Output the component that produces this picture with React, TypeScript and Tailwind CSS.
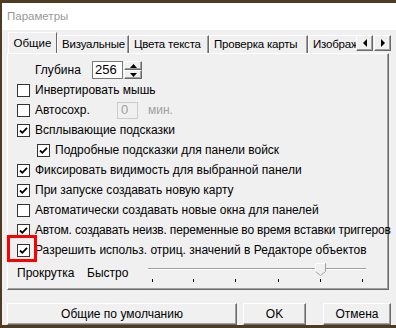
import React from "react";

const font = "font-['Liberation_Sans','Arial',sans-serif]";

function Check({ checked }: { checked: boolean }) {
  return (
    <div className="w-[13px] h-[13px] border border-[#333333] bg-white flex items-center justify-center shrink-0">
      {checked && (
        <svg width="11" height="11" viewBox="0 0 11 11">
          <path d="M2 5.5 L4.3 7.8 L9 2.8" fill="none" stroke="#000" strokeWidth="1.8" />
        </svg>
      )}
    </div>
  );
}

function Row({ label, checked, indent, tight }: { label: string; checked: boolean; indent?: boolean; tight?: boolean }) {
  return (
    <div className={`h-[20px] flex items-center ${indent ? "pl-[20px]" : ""}`}>
      <Check checked={checked} />
      <span className={`ml-[5px] whitespace-nowrap ${tight ? "tracking-[-0.17px]" : ""}`}>{label}</span>
    </div>
  );
}

function Tri({ dir }: { dir: "up" | "down" | "left" | "right" }) {
  const pts = {
    up: "0,4 3.5,0 7,4",
    down: "0,0 3.5,4 7,0",
    left: "4,0 0,4 4,8",
    right: "0,0 4,4 0,8",
  }[dir];
  const w = dir === "up" || dir === "down" ? 7 : 4;
  const h = dir === "up" || dir === "down" ? 4 : 8;
  return (
    <svg width={w} height={h} viewBox={`0 0 ${w} ${h}`}>
      <polygon points={pts} fill="#000" />
    </svg>
  );
}

const raised =
  "bg-[#f0f0f0] border-t border-l border-t-white border-l-white border-r border-b border-r-[#696969] border-b-[#696969] shadow-[inset_-1px_-1px_0_#a0a0a0]";

const tabs = [
  { name: "Общие", w: 49 },
  { name: "Визуальные", w: 72 },
  { name: "Цвета текста", w: 80 },
  { name: "Проверка карты", w: 99 },
  { name: "Изображения", w: 80 },
];

const rows = [
  { label: "Инвертировать мышь", checked: false },
  { label: "Автосохр.", checked: false, auto: true },
  { label: "Всплывающие подсказки", checked: true },
  { label: "Подробные подсказки для панели войск", checked: true, indent: true },
  { label: "Фиксировать видимость для выбранной панели", checked: true },
  { label: "При запуске создавать новую карту", checked: true },
  { label: "Автоматически создавать новые окна для панелей", checked: false },
  { label: "Автом. создавать неизв. переменные во время вставки триггеров", checked: true, tight: true },
  { label: "Разрешить использ. отриц. значений в Редакторе объектов", checked: true },
];

export default function App() {
  return (
    <div className={`relative w-[396px] h-[328px] bg-[#4f3a22] pt-[3px] pl-[2px] overflow-hidden text-[12px] text-black ${font}`}>
      <div className="w-[394px] h-[322px] bg-[#f0f0f0] flex flex-col overflow-hidden">
        <div className="h-[27px] shrink-0 bg-white flex items-center pl-[5px] text-[11.5px] text-[#999999]">
          Параметры
        </div>

        <div className="pl-[5px] flex flex-col">
          <div className="h-[23px] flex items-end text-[11.5px]">
            <div className="w-[349px] h-[23px] flex items-end overflow-hidden">
              {tabs.map((t, i) =>
                i === 0 ? (
                  <div
                    key={t.name}
                    style={{ width: t.w }}
                    className="relative z-10 ml-[1px] mb-[-1px] h-[22px] shrink-0 bg-[#f0f0f0] border-t border-l border-t-white border-l-white border-r border-r-[#696969] flex items-center justify-center"
                  >
                    {t.name}
                  </div>
                ) : (
                  <div
                    key={t.name}
                    style={{ width: t.w }}
                    className="h-[18px] shrink-0 bg-[#f0f0f0] border-t border-l border-t-white border-l-white border-r border-r-[#696969] shadow-[inset_-1px_0_0_#a0a0a0] flex items-center pl-[4px] whitespace-nowrap overflow-hidden tracking-[-0.2px]"
                  >
                    {t.name}
                  </div>
                )
              )}
            </div>
            <div className="self-start mt-[5px] flex gap-[1px]">
              <div className={`w-[17px] h-[16px] flex items-center justify-center ${raised}`}>
                <Tri dir="left" />
              </div>
              <div className={`w-[17px] h-[16px] flex items-center justify-center ${raised}`}>
                <Tri dir="right" />
              </div>
            </div>
          </div>

          <div className="w-[382px] h-[237px] border-t border-l border-t-white border-l-white border-r border-b border-r-[#696969] border-b-[#696969] shadow-[inset_-1px_-1px_0_#a0a0a0] pt-[6px] pl-[9px]">
            <div className="h-[20px] flex items-center">
              <span className="ml-[18px] w-[57px]">Глубина</span>
              <div className="w-[31px] h-[18px] bg-white border border-[#7a7a7a] flex items-center pl-[2px] text-[13px]">
                256
              </div>
              <div className="ml-[1px] w-[18px] h-[18px] flex flex-col">
                <div className={`flex-1 flex items-center justify-center ${raised}`}>
                  <Tri dir="up" />
                </div>
                <div className={`flex-1 flex items-center justify-center ${raised}`}>
                  <Tri dir="down" />
                </div>
              </div>
            </div>

            {rows.map((r) =>
              r.auto ? (
                <div key={r.label} className="h-[20px] flex items-center">
                  <Check checked={r.checked} />
                  <span className="ml-[5px] w-[82px]">{r.label}</span>
                  <div className="w-[21px] h-[17px] border border-[#cccccc] flex items-center pl-[3px] text-[13px] text-[#a0a0a0]">
                    0
                  </div>
                  <span className="ml-[10px] text-[#a0a0a0]">мин.</span>
                </div>
              ) : (
                <Row key={r.label} label={r.label} checked={r.checked} indent={r.indent} tight={r.tight} />
              )
            )}

            <div className="h-[24px] flex items-start pt-[4px]">
              <span className="w-[70px]">Прокрутка</span>
              <span className="w-[61px]">Быстро</span>
              <div className="relative w-[218px] h-[20px]">
                <div className="absolute left-0 right-0 top-[4px] h-[2px] border-t border-t-[#a0a0a0] border-b border-b-white" />
                {[4, 45, 87, 130, 172, 214].map((x) => (
                  <div key={x} className="absolute top-[15px] w-[1px] h-[3px] bg-black" style={{ left: x }} />
                ))}
                <svg className="absolute top-[-1px]" style={{ left: 167 }} width="11" height="13" viewBox="0 0 11 13">
                  <path d="M0.5 0.5 H10.5 V8.5 L5.5 12.5 L0.5 8.5 Z" fill="#f0f0f0" stroke="#a0a0a0" />
                  <path d="M0.5 8.5 V0.5 H10" fill="none" stroke="#ffffff" />
                </svg>
              </div>
            </div>
          </div>

          <div className="mt-[13px] flex h-[22px]">
            <div className={`w-[230px] h-[22px] flex items-center justify-center ${raised}`}>
              Общие по умолчанию
            </div>
            <div className={`ml-[6px] w-[63px] h-[22px] flex items-center justify-center ${raised}`}>
              OK
            </div>
            <div className={`ml-[17px] w-[68px] h-[22px] flex items-center justify-center ${raised}`}>
              Отмена
            </div>
          </div>
        </div>
      </div>

      <div className="absolute left-[7px] top-[235px] w-[30px] h-[27px] border-[3px] border-[#ff0000]" />
    </div>
  );
}
